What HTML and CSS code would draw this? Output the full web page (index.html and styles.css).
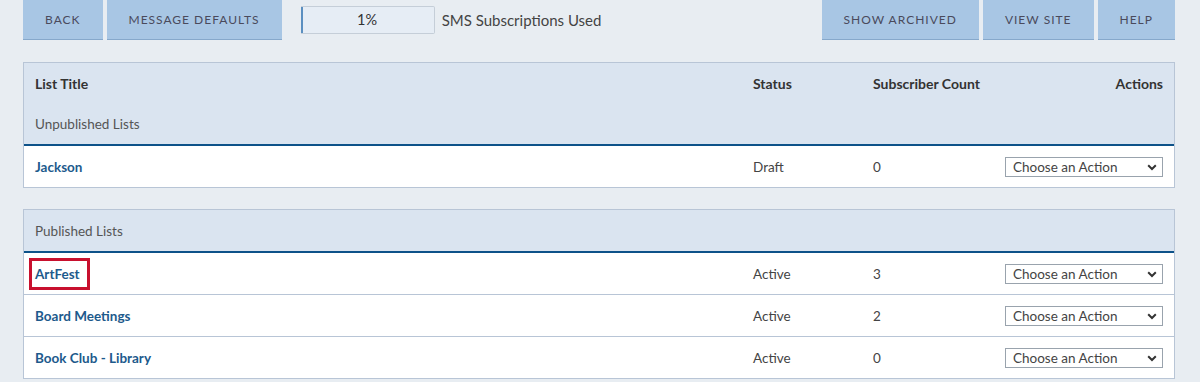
FILE: index.html
```html
<!DOCTYPE html>
<html>
<head>
<meta charset="utf-8">
<link rel="stylesheet" href="styles.css">
</head>
<body>
<div class="page">
  <div class="toolbar">
    <div class="group">
      <a class="btn">Back</a>
      <a class="btn">Message Defaults</a>
      <div class="usage">
        <div class="meter"><div class="fill" style="width:1%"></div><span>1%</span></div>
        <span class="usage-label">SMS Subscriptions Used</span>
      </div>
    </div>
    <div class="group">
      <a class="btn">Show Archived</a>
      <a class="btn">View Site</a>
      <a class="btn">Help</a>
    </div>
  </div>

  <table class="lists">
    <colgroup><col class="c-title"><col class="c-status"><col class="c-count"><col class="c-actions"></colgroup>
    <thead>
      <tr class="head">
        <th>List Title</th><th>Status</th><th>Subscriber Count</th><th class="right">Actions</th>
      </tr>
    </thead>
    <tbody>
      <tr class="grp"><td colspan="4">Unpublished Lists</td></tr>
      <tr class="row">
        <td><a class="name">Jackson</a></td><td>Draft</td><td>0</td>
        <td class="right"><div class="select"><select><option>Choose an Action</option></select><svg class="chev" width="10" height="7" viewBox="0 0 10 7"><path d="M1.2 1.3 L5 5 L8.8 1.3" fill="none" stroke="#333" stroke-width="2"/></svg></div></td>
      </tr>
    </tbody>
  </table>

  <table class="lists">
    <colgroup><col class="c-title"><col class="c-status"><col class="c-count"><col class="c-actions"></colgroup>
    <tbody>
      <tr class="grp first"><td colspan="4">Published Lists</td></tr>
      <tr class="row">
        <td><a class="name hl">ArtFest</a></td><td>Active</td><td>3</td>
        <td class="right"><div class="select"><select><option>Choose an Action</option></select><svg class="chev" width="10" height="7" viewBox="0 0 10 7"><path d="M1.2 1.3 L5 5 L8.8 1.3" fill="none" stroke="#333" stroke-width="2"/></svg></div></td>
      </tr>
      <tr class="row">
        <td><a class="name">Board Meetings</a></td><td>Active</td><td>2</td>
        <td class="right"><div class="select"><select><option>Choose an Action</option></select><svg class="chev" width="10" height="7" viewBox="0 0 10 7"><path d="M1.2 1.3 L5 5 L8.8 1.3" fill="none" stroke="#333" stroke-width="2"/></svg></div></td>
      </tr>
      <tr class="row">
        <td><a class="name">Book Club - Library</a></td><td>Active</td><td>0</td>
        <td class="right"><div class="select"><select><option>Choose an Action</option></select><svg class="chev" width="10" height="7" viewBox="0 0 10 7"><path d="M1.2 1.3 L5 5 L8.8 1.3" fill="none" stroke="#333" stroke-width="2"/></svg></div></td>
      </tr>
    </tbody>
  </table>
</div>
</body>
</html>
```

FILE: styles.css
```css
html, body {
  margin: 0;
  padding: 0;
  background: #e8edf2;
  font-family: Lato, "Liberation Sans", sans-serif;
  color: #444;
}
.page {
  width: 1152px;
  margin-left: 23px;
}
.toolbar {
  display: flex;
  justify-content: space-between;
  margin-bottom: 22px;
}
.group {
  display: flex;
  gap: 4px;
  align-items: flex-start;
}
.btn {
  display: flex;
  align-items: center;
  height: 39px;
  padding: 0 22px;
  background: #a8c6e4;
  border-bottom: 1px solid #86a8cb;
  color: #4a4a5c;
  font-size: 12px;
  letter-spacing: 1px;
  text-transform: uppercase;
  cursor: pointer;
}
.usage {
  display: flex;
  align-items: center;
  gap: 7px;
  margin-left: 15px;
  height: 39px;
}
.meter {
  position: relative;
  box-sizing: border-box;
  width: 134px;
  height: 28px;
  margin-top: 0;
  background: #e6edf5;
  border: 1px solid #c5ced8;
  border-left: none;
  border-radius: 0 2px 2px 0;
  display: flex;
  align-items: center;
  justify-content: center;
  overflow: hidden;
}
.meter .fill {
  position: absolute;
  left: 0;
  top: 0;
  bottom: 0;
  min-width: 2px;
  background: #5b8fc0;
}
.meter span {
  font-size: 14.5px;
  color: #333;
}
.usage-label {
  font-size: 15px;
  color: #444;
}
.lists {
  width: 1152px;
  table-layout: fixed;
  border-collapse: separate;
  border-spacing: 0;
  border: 1px solid #b8c5d6;
  background: #fff;
  margin-bottom: 21px;
  font-size: 13.5px;
}
.c-title { width: 718px; }
.c-status { width: 120px; }
.c-count { width: 132px; }
.lists th, .lists td {
  padding: 0 11px;
  text-align: left;
  vertical-align: middle;
}
.lists .right { text-align: right; }
.head th {
  height: 40px;
  background: #dae4f0;
  font-weight: 700;
  font-size: 14px;
  color: #333;
}
.grp td {
  height: 41px;
  background: #dae4f0;
  color: #555;
  border-bottom: 2px solid #0d5289;
}
.row td {
  height: 41px;
  border-bottom: 1px solid #b8c5d6;
  color: #444;
}
.row:last-child td { border-bottom: none; }
.name {
  font-weight: 700;
  color: #1d5a8c;
  cursor: pointer;
}
.hl {
  display: inline-block;
  padding: 5px 7px 5px 3px;
  margin: -5px -7px -5px -3px;
  outline: 3px solid #c8102e;
}
.select {
  position: relative;
  display: inline-block;
  vertical-align: middle;
}
.select select {
  appearance: none;
  -webkit-appearance: none;
  box-sizing: border-box;
  width: 158px;
  height: 20px;
  padding: 0 0 0 7px;
  margin: 0;
  border: 1px solid #99a3ad;
  border-radius: 0;
  background: #fff;
  font-family: Lato, "Liberation Sans", sans-serif;
  font-size: 13.5px;
  color: #444;
  display: block;
}
.chev {
  position: absolute;
  right: 6px;
  top: 7px;
  pointer-events: none;
}
```
